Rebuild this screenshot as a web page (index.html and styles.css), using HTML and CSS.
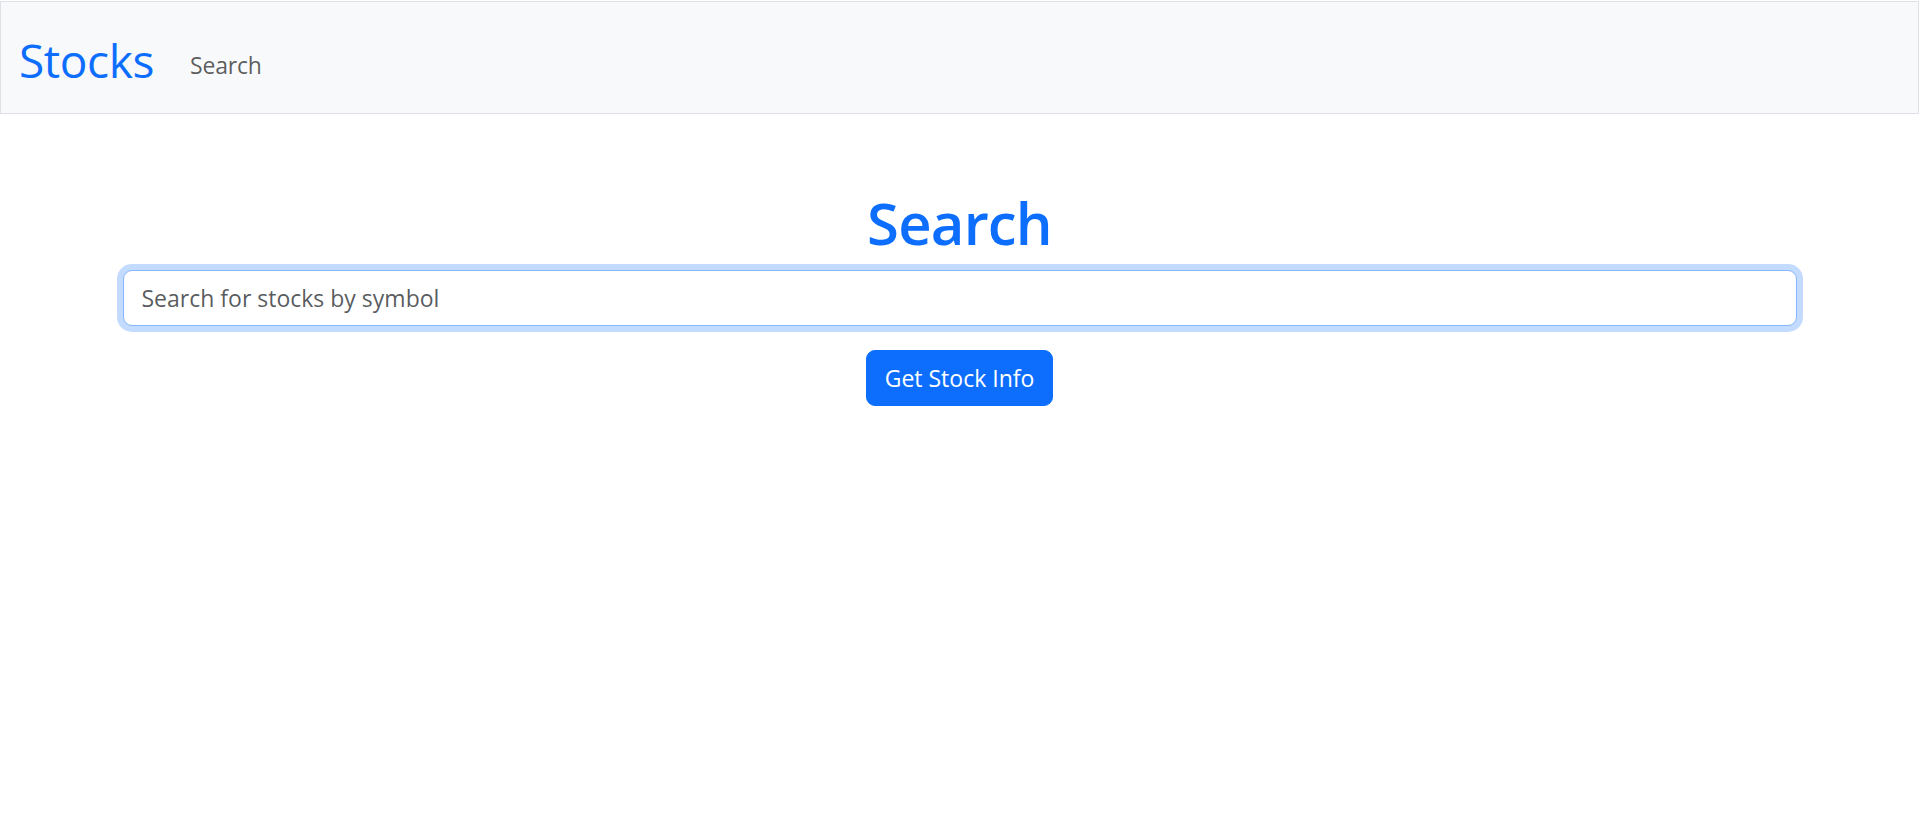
FILE: index.html
```html
<!DOCTYPE html>
<html lang="en">
<head>
<meta charset="utf-8">
<title>Stocks</title>
<link rel="stylesheet" href="styles.css">
</head>
<body>
<nav class="navbar">
  <a class="brand" href="#">Stocks</a>
  <a class="nav-link" href="#">Search</a>
</nav>
<main class="container">
  <h1 class="title">Search</h1>
  <input class="search-input" type="text" placeholder="Search for stocks by symbol" autofocus>
  <div class="actions">
    <button class="btn" type="button">Get Stock Info</button>
  </div>
</main>
</body>
</html>
```
FILE: styles.css
```css
html, body {
  margin: 0;
  padding: 0;
  background: #fff;
}
body {
  font-family: "Open Sans", "Noto Sans", "Liberation Sans", sans-serif;
  color: #212529;
}
.navbar {
  margin-top: 1px;
  display: flex;
  align-items: center;
  background: #f8f9fa;
  border: 1px solid #dee2e6;
  padding: 12px 18px;
  box-sizing: border-box;
  height: 113px;
}
.brand {
  font-size: 46px;
  line-height: 72px;
  color: #0d6efd;
  text-decoration: none;
  margin-right: 24px;
  margin-top: 5px;
  letter-spacing: -0.4px;
}
.nav-link {
  font-size: 23px;
  line-height: 36px;
  padding: 12px;
  color: rgba(0, 0, 0, 0.65);
  text-decoration: none;
  margin-top: 14px;
  letter-spacing: -0.2px;
}
.container {
  max-width: 1710px;
  margin: 0 auto;
  padding: 0 18px;
  box-sizing: border-box;
  text-align: center;
}
.title {
  margin: 73px 0 12px;
  font-size: 58px;
  line-height: 71px;
  font-weight: 650;
  color: #0d6efd;
  letter-spacing: -0.8px;
}
.search-input {
  display: block;
  width: 100%;
  box-sizing: border-box;
  height: 56px;
  padding: 9px 18px;
  font-family: inherit;
  font-size: 23px;
  line-height: 36px;
  color: #212529;
  background: #fff;
  border: 1px solid #86b7fe;
  border-radius: 9px;
  box-shadow: 0 0 0 6px rgba(13, 110, 253, 0.25);
  outline: none;
}
.search-input::placeholder {
  color: rgba(33, 37, 41, 0.75);
}
.actions {
  margin-top: 24px;
}
.btn {
  font-family: inherit;
  font-size: 23px;
  line-height: 36px;
  padding: 9px 18px;
  color: #fff;
  background: #0d6efd;
  border: 1px solid #0d6efd;
  border-radius: 9px;
  cursor: pointer;
}
```
